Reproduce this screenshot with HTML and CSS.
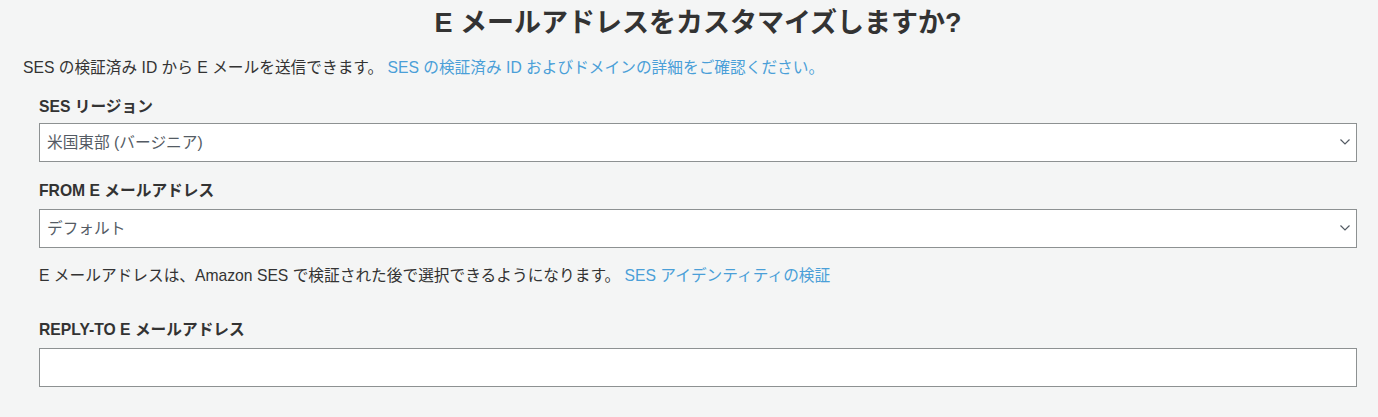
FILE: index.html
```html
<!DOCTYPE html>
<html lang="ja">
<head>
<meta charset="utf-8">
<title>E メールアドレスをカスタマイズしますか?</title>
<link rel="stylesheet" href="styles.css">
</head>
<body>
<div class="page">
  <h1 class="title">E メールアドレスをカスタマイズしますか?</h1>
  <p class="intro">SES の検証済み ID から E メールを送信できます。 <a class="link" href="#">SES の検証済み ID およびドメインの詳細をご確認ください。</a></p>
  <div class="fields">
    <div class="field">
      <label class="label">SES リージョン</label>
      <div class="select-wrap">
        <select class="select"><option>米国東部 (バージニア)</option></select>
        <svg class="chevron" width="10" height="6" viewBox="0 0 10 6"><path d="M0.5 0.5 L5 5 L9.5 0.5" fill="none" stroke="#545b64" stroke-width="1.2"/></svg>
      </div>
    </div>
    <div class="field field-2">
      <label class="label">FROM E メールアドレス</label>
      <div class="select-wrap">
        <select class="select"><option>デフォルト</option></select>
        <svg class="chevron" width="10" height="6" viewBox="0 0 10 6"><path d="M0.5 0.5 L5 5 L9.5 0.5" fill="none" stroke="#545b64" stroke-width="1.2"/></svg>
      </div>
      <p class="help">E メールアドレスは、Amazon SES で検証された後で選択できるようになります。 <a class="link" href="#">SES アイデンティティの検証</a></p>
    </div>
    <div class="field field-3">
      <label class="label">REPLY-TO E メールアドレス</label>
      <input class="input" type="text">
    </div>
  </div>
</div>
</body>
</html>
```
FILE: styles.css
```css
html, body {
  margin: 0;
  padding: 0;
  background: #f4f5f5;
}
body {
  font-family: "Liberation Sans", Arial, "Noto Sans CJK JP", sans-serif;
  color: #333;
  font-size: 15.7px;
}
.page {
  padding: 0 21px 0 23px;
}
.title {
  margin: 0;
  padding-left: 16px;
  text-align: center;
  font-size: 27px;
  line-height: 46px;
  font-weight: bold;
  color: #333;
}
.intro {
  margin: 12px 0 0;
  line-height: 20px;
  height: 20px;
}
.link {
  color: #4a9fd8;
  text-decoration: none;
}
.fields {
  padding-left: 16px;
  margin-top: 19px;
}
.field {
  display: flex;
  flex-direction: column;
}
.field-2 {
  margin-top: 19px;
}
.field-3 {
  margin-top: 34px;
}
.label {
  display: block;
  font-weight: bold;
  line-height: 20px;
  height: 20px;
  margin-bottom: 6px;
}
.field-2 .label, .field-3 .label {
  margin-bottom: 8px;
}
.select-wrap {
  position: relative;
}
.select, .input {
  display: block;
  box-sizing: border-box;
  width: 100%;
  height: 39px;
  margin: 0;
  border: 1px solid #8d9192;
  border-radius: 0;
  background: #fff;
  font-family: "Liberation Sans", Arial, "Noto Sans CJK JP", sans-serif;
  font-size: 15.7px;
  color: #545b64;
  padding: 0 30px 0 7px;
  outline: none;
}
.select {
  appearance: none;
  -webkit-appearance: none;
}
.chevron {
  position: absolute;
  right: 7px;
  top: 16px;
}
.help {
  margin: 18px 0 0;
  line-height: 20px;
  height: 20px;
}
```
